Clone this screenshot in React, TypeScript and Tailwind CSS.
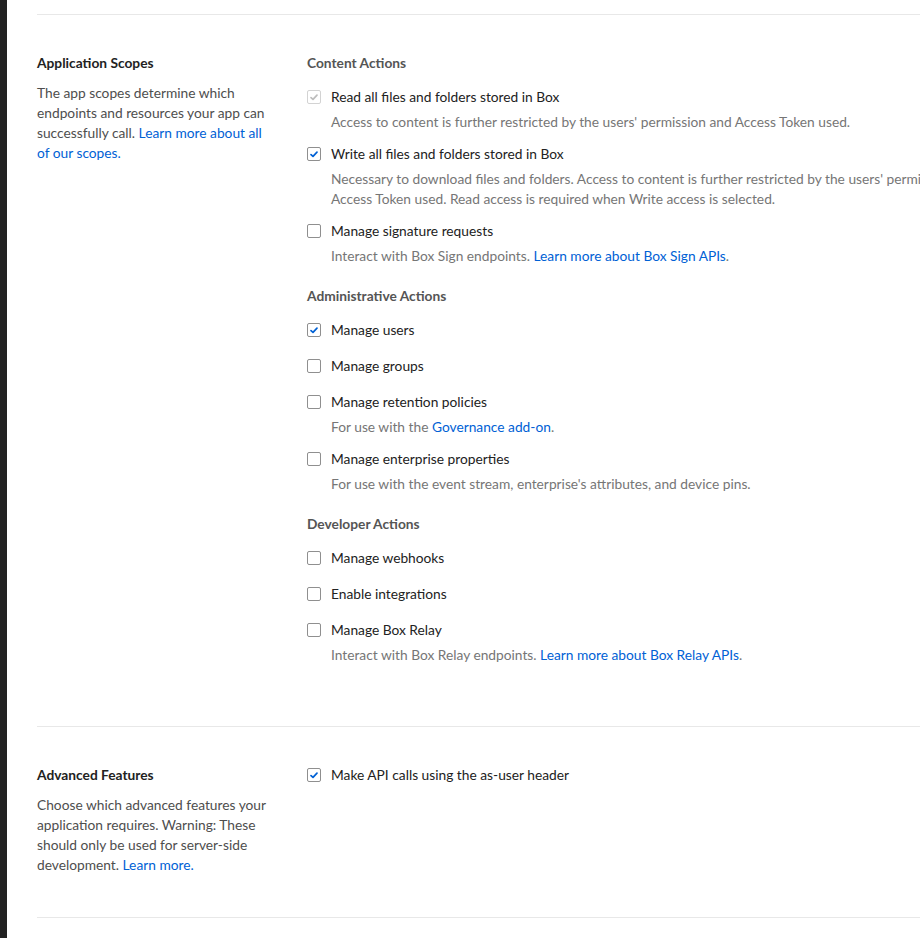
import React from 'react';

type Scope = {
  label: string;
  checked?: boolean;
  disabled?: boolean;
  desc?: React.ReactNode;
};

type Group = {
  title: string;
  items: Scope[];
};

const Link = ({ children }: { children: React.ReactNode }) => <a className="text-[#0061d5]">{children}</a>;

const groups: Group[] = [
  {
    title: 'Content Actions',
    items: [
      {
        label: 'Read all files and folders stored in Box',
        checked: true,
        disabled: true,
        desc: "Access to content is further restricted by the users' permission and Access Token used.",
      },
      {
        label: 'Write all files and folders stored in Box',
        checked: true,
        desc: "Necessary to download files and folders. Access to content is further restricted by the users' permission and Access Token used. Read access is required when Write access is selected.",
      },
      {
        label: 'Manage signature requests',
        desc: (
          <>
            Interact with Box Sign endpoints. <Link>Learn more about Box Sign APIs</Link>.
          </>
        ),
      },
    ],
  },
  {
    title: 'Administrative Actions',
    items: [
      { label: 'Manage users', checked: true },
      { label: 'Manage groups' },
      {
        label: 'Manage retention policies',
        desc: (
          <>
            For use with the <Link>Governance add-on</Link>.
          </>
        ),
      },
      {
        label: 'Manage enterprise properties',
        desc: "For use with the event stream, enterprise's attributes, and device pins.",
      },
    ],
  },
  {
    title: 'Developer Actions',
    items: [
      { label: 'Manage webhooks' },
      { label: 'Enable integrations' },
      {
        label: 'Manage Box Relay',
        desc: (
          <>
            Interact with Box Relay endpoints. <Link>Learn more about Box Relay APIs</Link>.
          </>
        ),
      },
    ],
  },
];

const Checkbox = ({ checked, disabled }: { checked?: boolean; disabled?: boolean }) => (
  <span
    className={`flex h-[14px] w-[14px] shrink-0 items-center justify-center rounded-[2px] border bg-white ${
      disabled ? 'border-[#d3d3d3]' : 'border-[#8f8f8f]'
    }`}
  >
    {checked && (
      <svg width="10" height="10" viewBox="0 0 10 10">
        <path
          d="M2 5.6 L4 7.4 L8 3.2"
          fill="none"
          stroke={disabled ? '#bdbdbd' : '#0061d5'}
          strokeWidth="1.7"
          strokeLinecap="round"
          strokeLinejoin="round"
        />
      </svg>
    )}
  </span>
);

const ScopeRow = ({ item, first, prevHasDesc }: { item: Scope; first: boolean; prevHasDesc: boolean }) => (
  <div className={first ? 'mt-[14px]' : prevHasDesc ? 'mt-3' : 'mt-4'}>
    <label className="flex h-5 items-center gap-[10px]">
      <Checkbox checked={item.checked} disabled={item.disabled} />
      <span className="text-[#222]">{item.label}</span>
    </label>
    {item.desc && <p className="mt-[5px] pl-6 leading-5 text-[#767676]">{item.desc}</p>}
  </div>
);

const Section = ({ title, desc, children }: { title: string; desc: React.ReactNode; children: React.ReactNode }) => (
  <div className="flex border-t border-[#e8e8e8] pt-[38px]">
    <div className="w-[270px] shrink-0">
      <h3 className="leading-5 font-bold text-[#222]">{title}</h3>
      <p className="mt-2.5 w-[236px] leading-5 text-[#4e4e4e]">{desc}</p>
    </div>
    <div className="w-[690px] shrink-0">{children}</div>
  </div>
);

export default function App() {
  return (
    <div className="flex h-[938px] overflow-hidden bg-white text-[13.75px] font-['Lato',sans-serif]">
      <div className="w-[7px] shrink-0 bg-[#222]" />
      <div className="flex-1 overflow-hidden pt-[14px] pl-[30px]">
        <Section
          title="Application Scopes"
          desc={
            <>
              The app scopes determine which endpoints and resources your app can successfully call.{' '}
              <Link>Learn more about all of our scopes.</Link>
            </>
          }
        >
          <div className="pb-[41px]">
            {groups.map((g, gi) => (
              <div key={g.title} className={gi > 0 ? 'mt-5' : ''}>
                <h4 className="leading-5 font-bold text-[#555]">{g.title}</h4>
                {g.items.map((item, i) => (
                  <ScopeRow key={item.label} item={item} first={i === 0} prevHasDesc={i > 0 && !!g.items[i - 1].desc} />
                ))}
              </div>
            ))}
            <div className="h-5" />
          </div>
        </Section>

        <Section
          title="Advanced Features"
          desc={
            <>
              Choose which advanced features your application requires. Warning: These should only be used for
              server-side development. <Link>Learn more.</Link>
            </>
          }
        >
          <label className="flex h-5 items-center gap-[10px]">
            <Checkbox checked />
            <span className="text-[#222]">Make API calls using the as-user header</span>
          </label>
        </Section>
        <div className="mt-[42px] border-t border-[#e8e8e8]" />
      </div>
    </div>
  );
}
